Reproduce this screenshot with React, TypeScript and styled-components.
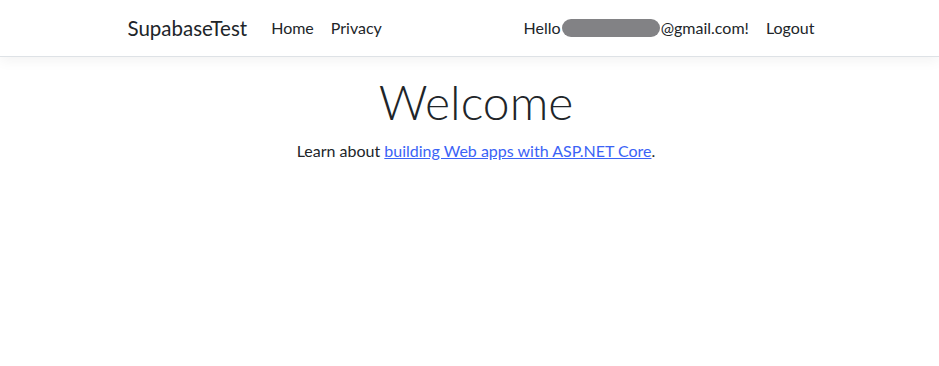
import styled, { createGlobalStyle } from 'styled-components';

const GlobalStyle = createGlobalStyle`
	html, body {
		margin: 0;
		padding: 0;
		background: #fff;
	}
	body {
		font-family: Lato, 'Noto Sans', sans-serif;
		font-size: 16px;
		line-height: 1.5;
		color: #212529;
	}
`;

const Navbar = styled.nav`
	background: #fff;
	border-bottom: 1px solid #dee2e6;
	box-shadow: 0 0.25rem 0.75rem rgba(0, 0, 0, 0.05);
	padding: 8px 0;
	margin-bottom: 16px;
`;

const Container = styled.div`
	max-width: 720px;
	margin: 0 auto;
	padding: 0 15px;
	box-sizing: border-box;
`;

const NavInner = styled(Container)`
	display: flex;
	align-items: center;
	height: 40px;
`;

const Brand = styled.a`
	font-size: 20.5px;
	line-height: 30px;
	color: #212529;
	margin-right: 16px;
	margin-left: 3px;
	text-decoration: none;
`;

const NavList = styled.div<{ right?: boolean }>`
	display: flex;
	align-items: center;
	margin-left: ${(p) => (p.right ? 'auto' : '0')};
`;

const NavLink = styled.a<{ last?: boolean }>`
	padding: 8px ${(p) => (p.last ? 0 : 9)}px 8px 8px;
	color: #212529;
	text-decoration: none;
	display: flex;
	align-items: center;
	white-space: nowrap;
`;

const Redacted = styled.span`
	display: inline-block;
	width: 98px;
	height: 18px;
	margin: 0 1px 0 1px;
	border-radius: 9px;
	background: #828285;
`;

const Main = styled(Container)`
	padding-left: 28px;
	text-align: center;
`;

const Title = styled.h1`
	font-size: 48px;
	font-weight: 300;
	line-height: 1.2;
	margin: 1px 0 8px;
	color: #212529;
`;

const Lead = styled.p`
	margin: 0;
`;

const Link = styled.a`
	color: #3b63f6;
	text-decoration: underline;
`;

export default function App() {
	return (
		<>
			<GlobalStyle />
			<Navbar>
				<NavInner>
					<Brand href="#">SupabaseTest</Brand>
					<NavList>
						<NavLink href="#">Home</NavLink>
						<NavLink href="#">Privacy</NavLink>
					</NavList>
					<NavList right>
						<NavLink href="#">
							Hello
							<Redacted />
							@gmail.com!
						</NavLink>
						<NavLink href="#" last>
							Logout
						</NavLink>
					</NavList>
				</NavInner>
			</Navbar>
			<Main>
				<Title>Welcome</Title>
				<Lead>
					Learn about <Link href="#">building Web apps with ASP.NET Core</Link>.
				</Lead>
			</Main>
		</>
	);
}
